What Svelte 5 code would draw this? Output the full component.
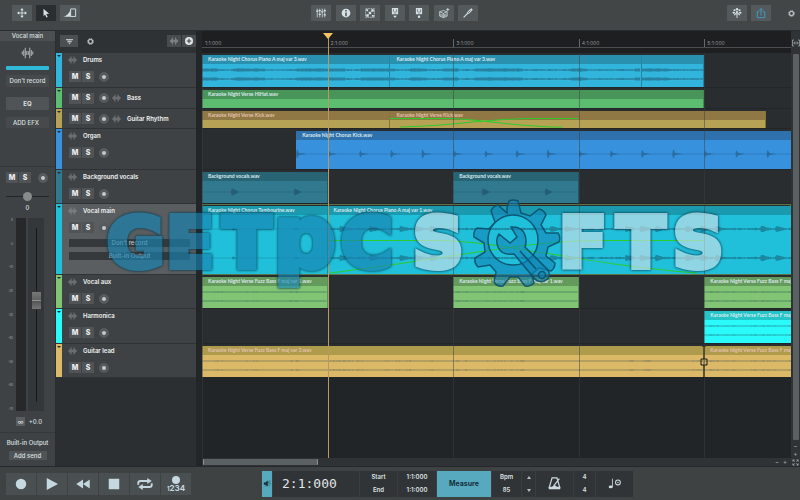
<script>
  const VISIBLE_BARS = 4.69;
  const BAR = 125;

  const long = 'Karaoke Night Verse Fuzz Bass F maj var 1.wav';
  const tracks = [
    { name: 'Drums', height: 35, color: '#32b5dc', head: '#2a90b0', wave: 'thick',
      clips: [[0, 1.5, 'Karaoke Night Chorus Piano A maj var 3.wav'], [1.5, 2, 'Karaoke Night Chorus Piano A maj var 3.wav'], [3.5, 0.5, '']] },
    { name: 'Bass', height: 21, compact: true, color: '#5cbd70', head: '#489459',
      clips: [[0, 4, 'Karaoke Night Verse HiHat.wav']] },
    { name: 'Guitar Rhythm', height: 20, compact: true, color: '#b6a254', head: '#8f7843', pink: true, fade: 'small',
      clips: [[0, 1.5, 'Karaoke Night Verse Kick.wav'], [1.5, 2.99, 'Karaoke Night Verse Kick.wav']] },
    { name: 'Organ', height: 41, color: '#3791dd', head: '#2e71ad', wave: 'spikes',
      clips: [[0.75, 4.25, 'Karaoke Night Chorus Kick.wav']] },
    { name: 'Background vocals', height: 34, color: '#30798f', head: '#296474', wave: 'hits',
      clips: [[0, 1, 'Background vocals.wav'], [2, 1, 'Background vocals.wav']] },
    { name: 'Vocal main', height: 71, color: '#20bfda', head: '#1a99af', wave: 'vocal', selected: true, fade: 'large',
      clips: [[0, 1, 'Karaoke Night Chorus Tambourine.wav', 'quiet'], [1, 4, 'Karaoke Night Chorus Piano A maj var 1.wav']] },
    { name: 'Vocal aux', height: 34, color: '#80c474', head: '#649a5b', wave: 'thin',
      clips: [[0, 1, long], [2, 1, long], [4, 1, long]] },
    { name: 'Harmonica', height: 35, color: '#2bfafa', head: '#23c5c9', wave: 'thin',
      clips: [[4, 1, long]] },
    { name: 'Guitar lead', height: 34, color: '#dcb966', head: '#ae9b4b', pink: true, wave: 'thin', handle: true,
      clips: [[0, 4, 'Karaoke Night Verse Fuzz Bass F maj var 3.wav'], [4, 1, long]] }
  ];

  const pct = (bars) => (bars / VISIBLE_BARS) * 100;

  function noise(n) {
    const v = Math.sin(n * 12.9898) * 43758.5453;
    return v - Math.floor(v);
  }

  function band(width, y, amp) {
    let top = '';
    let bottom = '';
    for (let x = 0; x <= width; x += 1) {
      const a = amp(x);
      top += `L${x} ${(y - a).toFixed(2)}`;
      bottom = `L${x} ${(y + a).toFixed(2)}` + bottom;
    }
    return `M0 ${y}${top}${bottom}Z`;
  }

  function wavePath(kind, start, length) {
    const w = Math.round(length * BAR);
    const at = (x) => x + start * BAR;
    const hit = (x, every, offset, size, decay) => {
      const d = (at(x) - offset + every * 20) % every;
      return d < decay ? size * (1 - d / decay) : 0;
    };
    if (kind === 'thick') {
      const amp = (x) => (noise(Math.floor(at(x) / 16) + 3) > 0.45 ? 1.2 : 0.5) + noise(at(x)) * 0.5;
      return band(w, 6, amp) + band(w, 15, amp);
    }
    if (kind === 'thin') {
      const amp = (x) => 0.4 + (noise(Math.floor(at(x) / 14)) > 0.5 ? noise(at(x)) * 0.3 : 0);
      return band(w, 6, amp) + band(w, 15, amp);
    }
    if (kind === 'spikes') return band(w, 14, (x) => 0.3 + hit(x, BAR / 4, 1, 3.5, 2) + hit(x, BAR / 4, 1, 1, 9));
    if (kind === 'hits') return band(w, 11, (x) => 0.2 + hit(x, BAR / 2, 30, 3.6, 7));
    if (kind === 'quiet') {
      const amp = (x) => 0.2 + hit(x, BAR / 2, 31, 1.4, 3);
      return band(w, 14, amp) + band(w, 43, amp);
    }
    if (kind === 'vocal') {
      const amp = (x) => 0.4 + noise(at(x)) * 0.9 + (noise(Math.floor(at(x) / 15) + 7) > 0.5 ? hit(x, 15, 2, 2.2, 9) : 0);
      return band(w, 14, amp) + band(w, 43, amp);
    }
    return '';
  }

  const tools = ['mixer', 'info', 'grid', 'import', 'export', 'box', 'tuner'];
  const transport = [['Record', 'record'], ['Play', 'play'], ['Rewind', 'rewind'], ['Stop', 'stop'], ['Loop', 'loop']];
  const scale = ['0', '-5', '-10', '-20', '-30', '-40', '-50', '-60', '-70'];
  let volume = $state(58);
  let pan = $state(50);
</script>

{#snippet icon(name)}
  <svg class="icon" viewBox="0 0 16 16" aria-hidden="true">
    {#if name === 'move'}
      <path d="M8 3v10M3 8h10" stroke="currentColor" stroke-width="1.4" />
      <path d="M8 0l2.8 3.6H5.200zM8 16l2.800-3.600H5.200zM0 8l3.600-2.800v5.600zM16 8l-3.600-2.800v5.600z" fill="currentColor" />
    {:else if name === 'pointer'}
      <path d="M4 1l9 8-4.500.5 2.300 4.800-2.200 1-2.200-4.900L4 13z" fill="currentColor" />
    {:else if name === 'fade'}
      <path d="M-3 14C3 13 7 8 9 2v12z" fill="currentColor" />
      <path d="M9 3V1.500h8v12H9z" fill="none" stroke="currentColor" stroke-width="1.500" />
    {:else if name === 'mixer'}
      <path d="M2 1v14M6 1v14M10 1v14M14 1v14" stroke="currentColor" stroke-width="1.200" />
      <path d="M.3 5h3.400M4.300 10h3.400M8.300 6h3.400M12.300 11h3.400M4.300 4h3.400M12.300 4h3.400" stroke="currentColor" stroke-width="2" />
    {:else if name === 'info'}
      <circle cx="8" cy="8" r="7" fill="currentColor" />
      <path d="M8 3v2.500M8 7v6" stroke="#505456" stroke-width="2.400" />
    {:else if name === 'grid'}
      <path d="M1 1h14v14H1z" fill="none" stroke="currentColor" stroke-width="1" stroke-dasharray="3 1" />
      <path d="M2 2h3v3H2zM10 2h4v4h-4zM6 6h4v4H6zM2 10h4v4H2zM11 11h3v3h-3z" fill="currentColor" />
    {:else if name === 'import' || name === 'export'}
      <path d="M3 0h10v10H3z" fill="currentColor" />
      <path d="M5.500 1.500v5M8 5v5M10.500 2v5" stroke="#53585a" stroke-width="1" />
      {#if name === 'import'}<path d="M8 16l-3-3.500h6z" fill="currentColor" />{:else}<circle cx="8" cy="14" r="2" fill="currentColor" />{/if}
    {:else if name === 'box'}
      <path d="M1 6l6-2 6 2v7l-6 2.500L1 13zM1 6l6 2.500L13 6M7 8.500v7M3 9v4M5 10v4M9 10v4M11 9v4" fill="none" stroke="currentColor" stroke-width="1.200" />
      <path d="M14 0v5M11.500 2.500h5" stroke="currentColor" stroke-width="1.300" />
    {:else if name === 'tuner'}
      <path d="M1 15l6-6M7 9c-1-2 3-5 7-8M7 9c2 1 5-3 8-7" fill="none" stroke="currentColor" stroke-width="1.800" />
    {:else if name === 'tree'}
      <path d="M8 16V7M8 10l5-3M8 10L3 7" stroke="currentColor" stroke-width="1.500" />
      <g fill="currentColor"><circle cx="8" cy="2" r="1.900" /><circle cx="4" cy="3.500" r="1.700" /><circle cx="12" cy="3.500" r="1.700" /><circle cx="2.500" cy="7.500" r="1.700" /><circle cx="13.500" cy="7.500" r="1.700" /><circle cx="8" cy="6.500" r="1.800" /><circle cx="4.500" cy="10.500" r="1.300" /><circle cx="11.500" cy="10.500" r="1.300" /></g>
    {:else if name === 'share'}
      <path d="M5 6H2v9.500h12V6h-3M8 12V1M5 4l3-3 3 3" fill="none" stroke="#419dcb" stroke-width="1.500" />
    {:else if name === 'gear'}
      <circle cx="8" cy="8" r="4.700" fill="none" stroke="currentColor" stroke-width="3" />
      <circle cx="8" cy="8" r="6.800" fill="none" stroke="currentColor" stroke-width="2" stroke-dasharray="2.670" />
    {:else if name === 'wave'}
      <path d="M1 6v4M3 4v8M5 1v14M7 5.500v5M9 5.500v5M11 1v14M13 4v8M15 6v4" stroke="currentColor" stroke-width="1.200" />
    {:else if name === 'filter'}
      <path d="M0 2h16v3H0zM3 6.500h10v3H3zM5 11h6l-3 4z" fill="currentColor" />
    {:else if name === 'plus'}
      <circle cx="8" cy="8" r="8" fill="currentColor" />
      <path d="M8 3.500v9M3.500 8h9" stroke="#404446" stroke-width="2.200" />
    {:else if name === 'record'}
      <circle cx="8" cy="8" r="7" fill="currentColor" />
    {:else if name === 'play'}
      <path d="M1 0l15 8-15 8z" fill="currentColor" />
    {:else if name === 'rewind'}
      <path d="M8 2v12L-1 8zM17 2v12L8 8z" fill="currentColor" />
    {:else if name === 'stop'}
      <path d="M1 1h14v14H1z" fill="currentColor" />
    {:else if name === 'loop'}
      <path d="M-1 9V7q0-3 3-3h10M17 7v2q0 3-3 3H4" fill="none" stroke="currentColor" stroke-width="2.500" />
      <path d="M11 0l6 4-6 4zM5 8v8l-6-4z" fill="currentColor" />
    {:else if name === 'fit'}
      <path d="M4 2H1v12h3M12 2h3v12h-3M4 8h8M6 5L3.500 8 6 11M10 5l2.500 3L10 11" fill="none" stroke="currentColor" stroke-width="1.500" />
    {:else if name === 'expand'}
      <path d="M6 2H2v4M10 2h4v4M6 14H2v-4M10 14h4v-4M2 2l4 4M14 2l-4 4M2 14l4-4M14 14l-4-4" fill="none" stroke="currentColor" stroke-width="1.800" />
    {:else if name === 'metronome'}
      <path d="M5 1h6l3.500 12h-13zM7 11l7-9" fill="none" stroke="currentColor" stroke-width="1.500" />
      <path d="M1 12h14v3H1zM5 12q3-4 6 0z" fill="currentColor" />
    {:else if name === 'note'}
      <path d="M5 1v12" stroke="currentColor" stroke-width="1.200" />
      <ellipse cx="2.500" cy="13" rx="3" ry="2" fill="currentColor" />
      <circle cx="13" cy="6.500" r="3.500" fill="none" stroke="currentColor" stroke-width="1.500" />
      <circle cx="13" cy="6.500" r="1" fill="currentColor" />
    {:else if name === 'snap'}
      <path d="M0 6h3l5-4v12l-5-4H0zM10 6l5-3M10 8.500h6M10 11l4 3M2 15L13 1" fill="currentColor" stroke="currentColor" stroke-width="1" />
    {/if}
  </svg>
{/snippet}

{#snippet msr(name)}
  <div class="msr">
    <button class="ms" aria-label="Mute {name}">M</button><button class="ms" aria-label="Solo {name}">S</button>
    <button class="arm" aria-label="Arm {name}"></button>
  </div>
{/snippet}

<div class="app">
  <header>
    <div class="group">
      <button class="tool" aria-label="Move">{@render icon('move')}</button>
      <button class="tool active" aria-label="Select">{@render icon('pointer')}</button>
      <button class="tool" aria-label="Fade">{@render icon('fade')}</button>
    </div>
    <div class="group center">
      {#each tools as t}
        <button class="tool" aria-label={t}>{@render icon(t)}</button>
      {/each}
    </div>
    <div class="group right">
      <button class="tool" aria-label="Community">{@render icon('tree')}</button>
      <button class="tool" aria-label="Share">{@render icon('share')}</button>
      <button class="plain" aria-label="Settings">{@render icon('gear')}</button>
    </div>
  </header>

  <main>
    <aside>
      <h2>Vocal main</h2>
      <div class="strip-top">
        <span class="big-wave">{@render icon('wave')}</span>
        <div class="swatch"></div>
        <button class="slot">Don't record</button>
        <button class="slot eq">EQ</button>
        <button class="slot efx">ADD EFX</button>
      </div>
      <div class="strip-mix">
        {@render msr('channel')}
        <input class="pan" type="range" aria-label="Pan" bind:value={pan} />
        <output>0</output>
        <div class="fader">
          <div class="scale">{#each scale as s}<span>{s}</span>{/each}</div>
          <div class="meter"></div>
          <div class="rail"><input type="range" aria-label="Volume" bind:value={volume} /></div>
        </div>
        <div class="gain"><button aria-label="Stereo">∞</button><span>+0.0</span></div>
      </div>
      <div class="strip-out">
        <span>Built-in Output</span>
        <button>Add send</button>
      </div>
    </aside>

    <section class="list">
      <div class="list-head">
        <button class="filter" aria-label="Filter tracks">{@render icon('filter')}</button>
        <button class="plain" aria-label="Track settings">{@render icon('gear')}</button>
        <div class="add">
          <button aria-label="Audio track">{@render icon('wave')}</button><button class="plus" aria-label="Add track">{@render icon('plus')}</button>
        </div>
      </div>
      {#each tracks as t}
        <div class="track" class:selected={t.selected} class:compact={t.compact} style:height="{t.height}px">
          <div class="tab" style:background={t.color}></div>
          <div class="info">
            {#if t.compact}{@render msr(t.name)}{/if}
            <div class="title">{@render icon('wave')}<span>{t.name}</span></div>
            {#if !t.compact}{@render msr(t.name)}{/if}
            {#if t.selected}
              <button class="route">Don't record</button>
              <button class="route">Built-in Output</button>
            {/if}
          </div>
        </div>
      {/each}
    </section>

    <section class="arrange">
      <div class="viewport">
        <div class="ruler">
          {#each [1, 2, 3, 4, 5] as n}
            <span style:left="{pct(n - 1)}%" class:first={n === 1}>{n}:1:000</span>
          {/each}
        </div>
        <div class="lanes">
          {#each tracks as t}
            <div class="lane" class:chosen={t.selected} style:height="{t.height}px">
              {#each t.clips as [start, length, label, kind]}
                <div class="clip" style:left="{pct(start)}%" style:width="{pct(length)}%" style:background={t.color}>
                  <div class="label" class:pink={t.pink} style:background={t.head}>{label}</div>
                  {#if t.wave}
                    <svg viewBox="0 0 {Math.round(length * BAR)} {t.height - 12}" preserveAspectRatio="none" aria-hidden="true">
                      <path d={wavePath(kind ?? t.wave, start, length)} />
                    </svg>
                  {/if}
                </div>
              {/each}
              {#if t.fade === 'small'}
                <svg class="fade" style:left="{pct(1.5)}%" style:width="{pct(1.5)}%" viewBox="0 0 188 20" preserveAspectRatio="none" aria-hidden="true">
                  <path d="M0 10H62C90 11 130 19 172 19M10 19C60 18 90 11 140 10H188" />
                </svg>
              {:else if t.fade === 'large'}
                <svg class="fade" style:left="{pct(1)}%" style:width="{pct(3)}%" viewBox="0 0 376 71" preserveAspectRatio="none" aria-hidden="true">
                  <path d="M0 37H115C180 39 260 62 368 70M2 70C100 59 190 38 265 37H376" />
                </svg>
              {/if}
              {#if t.handle}
                <svg class="handle" style:left="{pct(4)}%" viewBox="0 0 8 32" aria-hidden="true">
                  <path d="M4 0v13M4 19v13M1 13h6v6H1zM2 0h4M2 32h4" />
                </svg>
              {/if}
            </div>
          {/each}
          {#each [0, 1, 2, 3, 4] as n}<i class="bar" style:left="{pct(n)}%"></i>{/each}
        </div>
        <div class="playhead" style:left="{pct(1)}%"></div>
      </div>
      <div class="vscroll">
        <button class="fit" aria-label="Fit width">{@render icon('fit')}</button>
        <div class="thumb"></div>
        <button aria-label="Shrink tracks">−</button>
        <button aria-label="Grow tracks">+</button>
      </div>
      <div class="hscroll">
        <div class="thumb"></div>
        <button aria-label="Zoom out">−</button>
        <button aria-label="Zoom in">+</button>
      </div>
      <button class="full" aria-label="Full view">{@render icon('expand')}</button>
    </section>
  </main>

  <footer>
    <div class="transport">
      {#each transport as [label, name]}
        <button aria-label={label}>{@render icon(name)}</button>
      {/each}
      <button class="count" aria-label="Count in"><b></b><span><small>1</small>234</span></button>
    </div>
    <div class="status">
      <button class="snap" aria-label="Mute click">{@render icon('snap')}</button>
      <div class="time">2:1:000</div>
      <div class="pair"><span>Start</span><span>End</span></div>
      <div class="pair wide"><span>1:1:000</span><span>1:1:000</span></div>
      <button class="measure">Measure</button>
      <div class="pair bpm"><span>Bpm</span><span>85</span></div>
      <div class="steps"><button aria-label="Tempo up"></button><button class="down" aria-label="Tempo down"></button></div>
      <button class="cell" aria-label="Metronome">{@render icon('metronome')}</button>
      <div class="pair sig"><span>4</span><span>4</span></div>
      <button class="cell note" aria-label="Note settings">{@render icon('note')}</button>
    </div>
  </footer>

  <svg class="mark" width="640" height="100" viewBox="100 190 640 100" aria-hidden="true">
    <g class="blue">
      <text x="107" y="267">G</text>
      <text x="166" y="267">E</text>
      <text x="223" y="267">T</text>
      <text class="low" x="274" y="267">p</text>
      <text x="341" y="267">C</text>
    </g>
    <g class="white">
      <text x="413" y="267">S</text>
      <text x="559" y="267">F</text>
      <text x="617" y="267">T</text>
      <text x="673" y="267">S</text>
    </g>
    <g class="gear">
      <path fill-rule="evenodd" d="M507 208l2-7q4-2 9 0l3 12 9 3 9-7q5 1 7 6l-5 10 5 8 12 0q3 4 1 9l-11 5-2 9 9 7q0 5-4 8l-12-3-7 6 2 9q-4 4-9 3l-7-9-8 0-7 9q-6 1-9-4l2-10-6-7-12 2q-4-4-3-9l10-6-1-9-10-6q-1-6 3-9l12 1 6-7-4-11q2-5 7-6l9 8zM488 240a25 25 0 1 0 50 0a25 25 0 1 0-50 0z" />
      <path d="M511 227q11-1 14 8 2 7 0 12l23 23q4 8-4 11-6 2-10-3l-20-24q-12 2-16-7-3-7 1-13l11 9 7-6z" />
      <circle cx="542" cy="275" r="3.500" />
      <path d="M520 251l16 18" />
    </g>
  </svg>
</div>

<style>
  :global(body) { margin: 0; background: #3e4243; }
  .app { position: relative; display: flex; flex-direction: column; min-height: 100vh; overflow: hidden; font: 500 6px/8px Inter, "Open Sans", sans-serif; color: #dde1e3; }
  .app :global(*) { box-sizing: border-box; }
  button { display: flex; align-items: center; justify-content: center; margin: 0; padding: 0; border: 0; background: none; color: inherit; font: inherit; }
  .icon { display: block; width: 10px; height: 10px; overflow: visible; }

  header { display: flex; height: 31px; padding: 5px 23px 0 12px; background: #424647; border-bottom: 1px solid #2a2d2f; }
  .group { display: flex; gap: 4px; }
  .group.center { justify-content: space-between; gap: 0; width: 185px; margin: 0 auto; padding-right: 18px; }
  .group.right { margin-right: -19px; }
  .tool { width: 20px; height: 16px; background: #54595b; color: #d5e1e7; }
  .tool.active { background: #2b2e30; }
  .plain { width: 10px; color: #b6babc; }
  .plain :global(.icon) { width: 7px; height: 7px; }
  .right .plain { margin-left: 11px; height: 16px; }

  main { display: flex; flex: 1; }
  aside { display: flex; flex-direction: column; width: 56px; background: #3e4244; border-right: 1px solid #2b2e30; text-align: center; }
  h2 { margin: 0; padding: 1px 0; font: 500 6px/8px Inter, sans-serif; background: #4b4f51; }
  .strip-top { display: flex; flex-direction: column; height: 126px; padding: 6px 6px 0; border-bottom: 1px solid #34383a; }
  .big-wave { align-self: center; color: #c2c5c7; }
  .big-wave :global(.icon) { width: 13px; height: 12px; }
  .swatch { height: 4px; margin: 7px 0 5px; border-radius: 1px; background: #2fb8d8; }
  .slot { height: 12px; background: #464a4c; border-radius: 1px; }
  .eq { height: 13px; margin: 10px 0 7px; background: #505456; font-weight: 700; }
  .efx { justify-content: flex-start; height: 11px; padding-left: 7px; }
  .msr { display: flex; align-items: center; }
  .ms { width: 12px; height: 11px; margin-right: 1px; background: #505456; font-weight: 800; font-size: 7px; color: #eceeef; }
  .arm { width: 10px; height: 10px; margin-left: 4px; border: 3px solid #565a5d; border-radius: 5px; background: #c6c9cb; }
  .strip-mix { display: flex; flex-direction: column; height: 266px; padding: 5px 6px 0; border-bottom: 1px solid #34383a; }
  .strip-mix .arm { margin-left: auto; }
  .strip-mix .msr { padding-right: 1px; }
  input { appearance: none; margin: 0; background: none; }
  .pan { width: 100%; height: 10px; margin-top: 8px; background: linear-gradient(#222527, #222527) center / 100% 1px no-repeat; }
  .pan::-webkit-slider-thumb { appearance: none; width: 9px; height: 9px; border-radius: 5px; background: #888b8c; }
  output { margin: 3px 0 6px; }
  .fader { display: flex; height: 193px; margin-right: 5px; }
  .scale { display: flex; flex-direction: column; justify-content: space-between; width: 10px; font-size: 3px; line-height: 4px; color: #989c9e; padding-right: 3px; text-align: right; }
  .meter { width: 10px; background: #26282a; }
  .rail { flex: 1; margin-left: 2px; background: #34373a; }
  .rail input { display: block; writing-mode: vertical-lr; direction: rtl; width: 100%; height: 100%; background: linear-gradient(#151718, #151718) center / 1px 90% no-repeat; }
  .rail input::-webkit-slider-thumb { appearance: none; width: 11px; height: 19px; border: 1px solid #343637; background: linear-gradient(#777, #606263 45%, #aaa 48%, #555 55%, #747677); }
  .gain { display: flex; justify-content: space-between; align-items: center; margin-top: 6px; padding: 0 7px 0 10px; }
  .gain button { width: 9px; height: 9px; background: #5a5e60; }
  .strip-out { display: flex; flex-direction: column; align-items: center; gap: 4px; padding-top: 6px; white-space: nowrap; }
  .strip-out button { width: 38px; height: 9px; background: #505456; }

  .list { width: 146px; padding-right: 6px; background: linear-gradient(90deg, #2b2f31 140px, #232628 140px); }
  .list-head { display: flex; align-items: center; height: 22px; padding: 0 0 2px 4px; background: #2e3234; }
  .filter { width: 18px; height: 12px; background: #4b4f51; color: #b9bdbf; }
  .filter :global(.icon) { width: 7px; height: 7px; }
  .list-head .plain { margin-left: 7px; justify-content: center; }
  .add { display: flex; gap: 1px; margin-left: auto; }
  .add button { width: 14px; height: 12px; background: #484c4e; color: #9da1a3; }
  .add .plus { color: #e1e4e5; }
  .add :global(.icon) { width: 8px; height: 8px; }
  .track { display: flex; background: #3e4244; border-bottom: 1px solid #2f3335; }
  .track.selected { background: #5a5e60; }
  .tab { width: 6px; }
  .tab::before { content: ""; display: block; width: 0; margin: 2px auto; border: 2px solid transparent; border-top-color: #1d2f38; border-bottom: 0; }
  .info { display: flex; flex-direction: column; flex: 1; padding: 3px 6px 0 6px; }
  .title { display: flex; align-items: center; gap: 6px; color: #f0f2f3; font-weight: 600; white-space: nowrap; }
  .title :global(.icon) { width: 9px; height: 8px; color: #989c9e; }
  .info > .msr { margin: 7px 0 0 1px; }
  .compact .info { flex-direction: row; align-items: center; gap: 3px; padding-top: 0; }
  .compact .info > .msr { margin-top: 0; }
  .route { height: 8px; margin: 6px 0 0 1px; background: #36393b; color: #c6cacc; }
  .route + .route { margin-top: 5px; }

  .arrange { display: grid; flex: 1; min-width: 0; grid-template: 1fr 8px / 1fr 9px; background: #2f3335; }
  .viewport { position: relative; display: flex; flex-direction: column; overflow: hidden; background: #212527; }
  .ruler { position: relative; height: 22px; background: linear-gradient(#1d1f21 16px, #4b4e50 16px, #4b4e50 17px, #1d1f21 17px); color: #919598; font-size: 5px; font-weight: 400; }
  .ruler span { position: absolute; top: 8px; height: 8px; padding-left: 2px; border-left: 1px solid #64686a; }
  .ruler .first { border-left-color: transparent; }
  .lanes { position: relative; flex: 1; }
  .lane { position: relative; background: #292d2f; border-bottom: 1px solid #222628; }
  .lane.chosen { outline: 1px solid #5d7545; outline-offset: -1px; }
  .clip { position: absolute; display: flex; flex-direction: column; top: 2px; bottom: 0; overflow: hidden; border-right: 1px solid #0004; }
  .clip svg { flex: 1; width: 100%; min-height: 0; fill: #13364a; fill-opacity: .4; }
  .label { flex: none; height: 9px; padding-left: 6px; font: 700 5px/9px Lato, sans-serif; color: #dce9ec; white-space: nowrap; }
  .label.pink { color: #e4c1b0; }
  .fade { position: absolute; top: 0; height: 100%; fill: none; stroke: #2ecb2c; stroke-width: 1; }
  .handle { position: absolute; top: 2px; width: 8px; height: 32px; margin-left: -4px; fill: none; stroke: #17191a; stroke-width: 1; }
  .bar { position: absolute; top: 0; bottom: 0; width: 1px; background: #3b3f4180; }
  .playhead { position: absolute; top: 2px; bottom: 0; width: 1px; background: #bd9760; }
  .playhead::before { content: ""; position: absolute; left: -5px; border: 5px solid transparent; border-top: 6px solid #f6c462; border-bottom: 0; }
  .vscroll { display: flex; flex-direction: column; align-items: center; color: #a5a9ab; }
  .vscroll button { height: 8px; }
  .vscroll .fit { height: 23px; }
  .vscroll .fit :global(.icon) { width: 8px; height: 8px; }
  .vscroll .thumb { flex: 1; width: 6px; margin-bottom: 2px; border-radius: 1px; background: #5b6163; }
  .hscroll { display: flex; align-items: center; gap: 4px; padding-right: 4px; color: #a5a9ab; }
  .hscroll .thumb { width: 115px; height: 6px; margin: 0 auto 0 1px; border: solid #8c9294; border-width: 0 1px; border-radius: 1px; background: #5b6163; }
  .full :global(.icon) { width: 7px; height: 7px; color: #a5a9ab; }

  footer { position: relative; display: flex; align-items: center; height: 34px; padding: 0 6px; background: #3e4243; border-top: 1px solid #26292b; }
  .transport { display: flex; gap: 1px; }
  .transport button { width: 30px; height: 22px; background: #4a4f51; color: #c5d7df; }
  .transport :global(.icon) { width: 12px; height: 12px; }
  .transport .count { flex-direction: column; gap: 1px; font-weight: 700; font-size: 8px; line-height: 7px; }
  .count b { width: 8px; height: 8px; border-radius: 4px; background: #c5d7df; }
  small { font-size: 6px; }
  .status { display: flex; gap: 1px; height: 26px; margin-left: 71px; background: #393d3e; }
  .status > * { background: #303436; }
  .status .snap { width: 10px; background: #56a9bf; color: #16303a; }
  .snap :global(.icon) { width: 7px; height: 7px; }
  .time { width: 86px; padding-left: 9px; font: 13px/26px "DejaVu Sans Mono", monospace; color: #e2e6e8; }
  .pair { display: flex; flex-direction: column; justify-content: space-around; width: 37px; text-align: center; font-weight: 600; }
  .pair.wide { width: 38px; }
  .status .measure { width: 54px; background: #56a9bf; color: #173039; font-size: 7px; font-weight: 700; }
  .pair.bpm { width: 29px; }
  .steps { display: flex; flex-direction: column; justify-content: space-around; align-items: center; width: 13px; }
  .steps button { border: 2px solid transparent; border-bottom: 3px solid #b8bdc0; border-top: 0; }
  .steps .down { border-top: 3px solid #b8bdc0; border-bottom: 0; }
  .cell { width: 37px; color: #cddbe1; }
  .cell :global(.icon) { width: 13px; height: 13px; }
  .note :global(.icon) { width: 11px; height: 11px; }
  .pair.sig { width: 21px; }

  .mark { position: absolute; left: 100px; top: 190px; overflow: visible; pointer-events: none; font: 700 70px/1 "DejaVu Sans", sans-serif; }
  .blue, .white { stroke-width: 6; filter: drop-shadow(0 0 1px #03374c) drop-shadow(0 0 1px #03374c); }
  .blue { fill: #1883b2; stroke: #1883b2; opacity: .65; }
  .low { font-size: 86px; }
  .white { fill: #cbe2e8; stroke: #cbe2e8; opacity: .65; }
  .gear { fill: #1484b6; fill-opacity: .6; stroke: #094b66; stroke-width: 1.5; stroke-opacity: .85; }
</style>
